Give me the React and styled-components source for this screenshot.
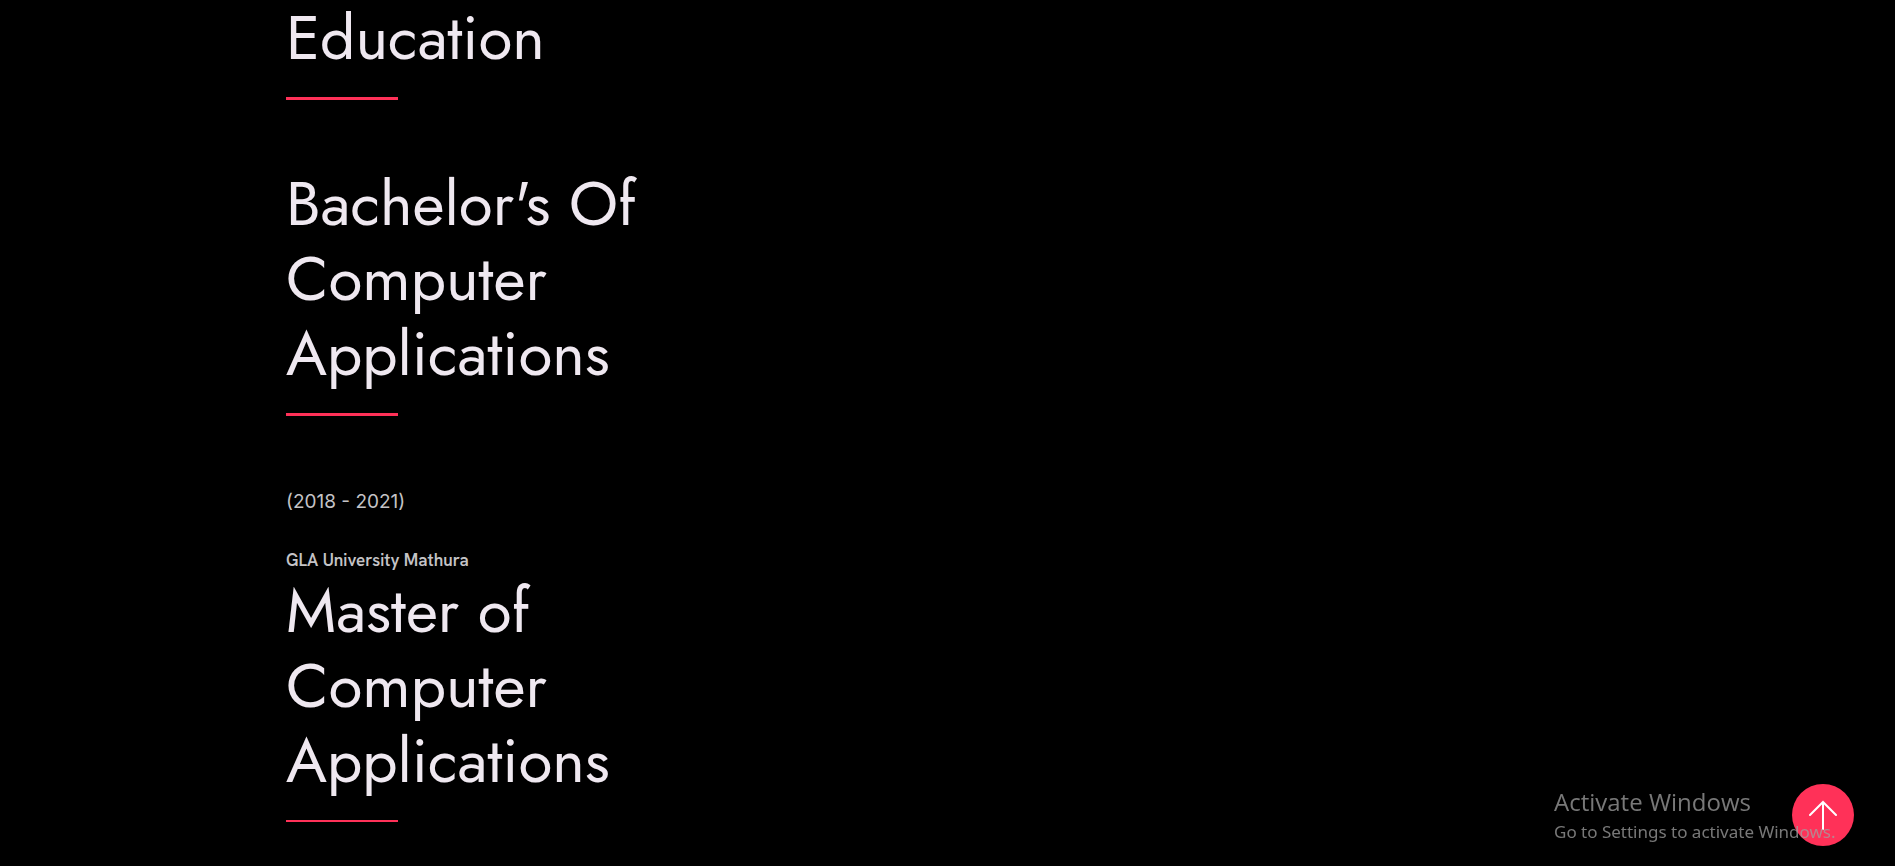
import React from "react";
import styled, { createGlobalStyle } from "styled-components";

const GlobalStyle = createGlobalStyle`
  *, *::before, *::after { box-sizing: border-box; }
  body {
    margin: 0;
    background: #000;
    color: #c4c3c6;
    font-family: Inter, "Liberation Sans", sans-serif;
  }
`;

const Container = styled.main`
  width: 100%;
  max-width: 1323px;
  margin: 0 auto;
`;

const Column = styled.section`
  width: 33%;
  min-width: 340px;
`;

const Title = styled.h2`
  margin: 0;
  padding-bottom: ${({ $gap }) => $gap}px;
  color: #efe8f0;
  font-family: Jost, Lato, sans-serif;
  font-size: 62px;
  font-weight: 400;
  line-height: 75px;

  &::after {
    content: "";
    display: block;
    width: 112px;
    height: ${({ $rule }) => $rule || 3}px;
    margin-top: 22px;
    background: #ff3158;
  }
`;

const Period = styled.p`
  margin: 0 0 30px;
  font-size: 19px;
  line-height: 32px;
`;

const School = styled.h6`
  margin: 0;
  font-family: "Hanken Grotesk", Inter, sans-serif;
  font-size: 17px;
  font-weight: 600;
  line-height: 25px;
`;

const ScrollTop = styled.button`
  position: fixed;
  right: 41px;
  bottom: 20px;
  display: grid;
  place-items: center;
  width: 62px;
  height: 62px;
  padding: 0;
  border: 0;
  border-radius: 50%;
  background: #ff3158;
  color: #fff;
  cursor: pointer;
`;

const Watermark = styled.aside`
  position: fixed;
  right: 58px;
  bottom: 20px;
  z-index: 1;
  width: 283px;
  color: rgba(160, 160, 160, 0.75);
  font-family: "Segoe UI", "Open Sans", sans-serif;
  white-space: nowrap;
  pointer-events: none;
`;

const WatermarkTitle = styled.p`
  margin: 0;
  font-size: 24px;
  line-height: 32px;
`;

const WatermarkText = styled.p`
  margin: 0;
  font-family: "Segoe UI", "Noto Sans", sans-serif;
  font-size: 17px;
  line-height: 28px;
`;

export default function App() {
  return (
    <>
      <GlobalStyle />
      <Container>
        <Column>
          <Title $gap={66}>Education</Title>
          <Title $gap={70}>Bachelor's Of Computer Applications</Title>
          <Period>(2018 - 2021)</Period>
          <School>GLA University Mathura</School>
          <Title $gap={0} $rule={2}>Master of Computer Applications</Title>
        </Column>
      </Container>
      <ScrollTop type="button" aria-label="Back to top">
        <svg width="28" height="30" viewBox="0 0 28 30" fill="none" stroke="currentColor" strokeWidth="2" strokeLinecap="round" aria-hidden="true">
          <path d="M14 29V2M1 15 14 2l13 13" />
        </svg>
      </ScrollTop>
      <Watermark>
        <WatermarkTitle>Activate Windows</WatermarkTitle>
        <WatermarkText>Go to Settings to activate Windows.</WatermarkText>
      </Watermark>
    </>
  );
}
